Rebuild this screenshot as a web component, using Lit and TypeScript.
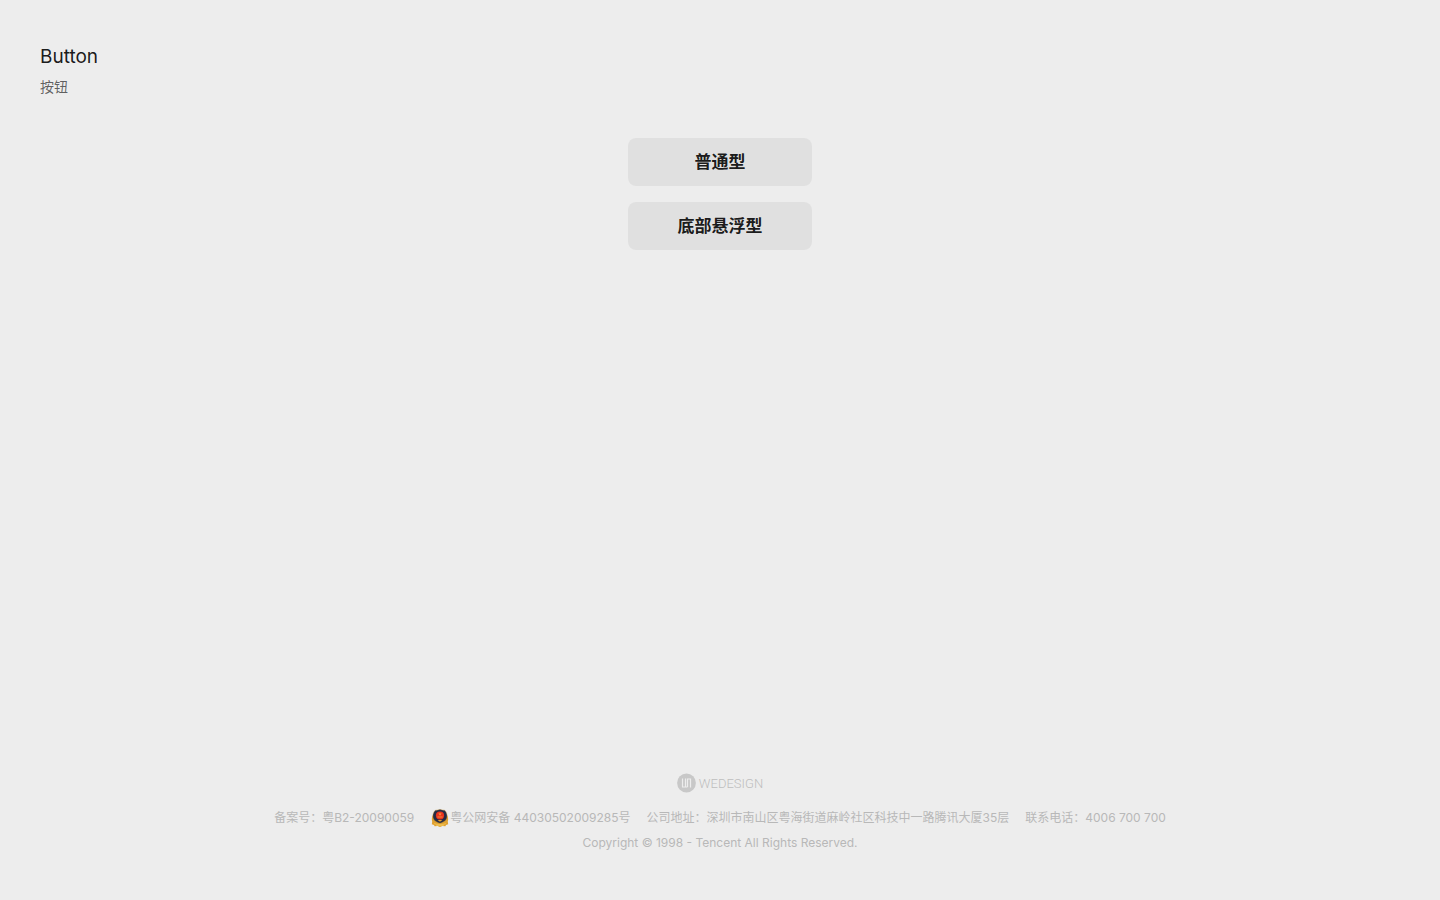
import { LitElement, html, css } from "lit";
import { customElement } from "lit/decorators.js";

@customElement("app-root")
export class AppRoot extends LitElement {
  static styles = css`
    :host {
      display: flex;
      flex-direction: column;
      box-sizing: border-box;
      min-height: 100vh;
      background: #ededed;
      color: rgba(0, 0, 0, 0.9);
      font-family: Inter, "Noto Sans CJK SC", sans-serif;
    }
    .header {
      padding: 40px 40px 0;
    }
    .title {
      margin: 0;
      font-size: 19px;
      font-weight: 400;
      line-height: 34px;
    }
    .desc {
      margin: 2px 0 0;
      font-size: 14px;
      line-height: 22px;
      color: rgba(0, 0, 0, 0.6);
    }
    .actions {
      display: flex;
      flex-direction: column;
      align-items: center;
      gap: 16px;
      padding: 40px 16px;
    }
    .btn {
      width: 184px;
      height: 48px;
      border: 0;
      border-radius: 8px;
      padding: 0 24px;
      background: rgba(0, 0, 0, 0.05);
      color: inherit;
      font: inherit;
      font-size: 17px;
      font-weight: 600;
      line-height: 24px;
      cursor: pointer;
    }
    .footer {
      margin-top: auto;
      padding: 0 40px 45px;
      text-align: center;
      font-size: 12px;
      line-height: 25px;
      color: #b8b8b8;
    }
    .brand {
      display: flex;
      align-items: flex-start;
      justify-content: center;
      gap: 3px;
      margin-bottom: 10px;
      color: #bebebe;
      font: 300 13px/22px Roboto, sans-serif;
    }
    .info {
      display: flex;
      flex-wrap: wrap;
      justify-content: center;
      column-gap: 16px;
    }
    .link {
      display: inline-flex;
      align-items: center;
      color: inherit;
      text-decoration: none;
    }
    .badge {
      margin: 0 1px;
    }
    .copy {
      margin: 0;
    }
  `;

  render() {
    return html`
      <header class="header">
        <h1 class="title">Button</h1>
        <p class="desc">按钮</p>
      </header>
      <main class="actions">
        <button class="btn" type="button">普通型</button>
        <button class="btn" type="button">底部悬浮型</button>
      </main>
      <footer class="footer">
        <div class="brand">
          <svg width="19" height="20" viewBox="0 0 19 20" aria-hidden="true">
            <circle cx="9.5" cy="10" r="9.4" fill="#c8c8c8" />
            <path
              d="M5.500 5.500v8.500H8.500V5.500M10.500 14V6H13.500v8.500M8 14h2.500"
              fill="none"
              stroke="#ededed"
              stroke-width="1.200"
            />
          </svg>
          <span>WEDESIGN</span>
        </div>
        <div class="info">
          <a class="link" href="#">备案号：粤B2-20090059</a>
          <a class="link" href="#">
            <svg class="badge" width="18" height="18" viewBox="0 0 18 18" aria-hidden="true">
              <path d="M2 6C.8 8 .5 10.500 1.200 12.700L.8 15.300l2.200.6.6 1.300 3-.2L9 17.900l2.400-.9 3 .2.6-1.300 2.200-.6-.4-2.600c.7-2.200.4-4.700-.8-6.700z" fill="#dfa02f" />
              <path d="M3.200 14.600c3.400 1.300 8.200 1.300 11.600 0M5 16.200c2.600.7 5.400.7 8 0" fill="none" stroke="#f2c659" stroke-width=".8" />
              <path d="M9 .2c1.500.8 3 1 4.600 1 1.700 1.600 2.500 3.600 2.500 5.800 0 3.500-2.200 5.800-7.100 7.300C4.100 12.800 1.900 10.500 1.900 7c0-2.200.8-4.200 2.500-5.800C6 1.200 7.500 1 9 .2z" fill="#252b45" stroke="#c8973a" stroke-width=".4" />
              <circle cx="9" cy="6.500" r="4.100" fill="#e8341e" />
              <path d="M9 3.200l.5 1.200 1.300.1-1 .9.300 1.200L9 5.900l-1.100.7.3-1.200-1-.9 1.300-.1zM6.400 7.500h5.200v.9H6.400z" fill="#f28a3c" />
              <path d="M6.600 11h4.800L9 12.800z" fill="#e5a02c" />
            </svg>
            <span>粤公网安备 44030502009285号</span>
          </a>
          <span>公司地址：深圳市南山区粤海街道麻岭社区科技中一路腾讯大厦35层</span>
          <span>联系电话：4006 700 700</span>
        </div>
        <p class="copy">Copyright © 1998 - Tencent All Rights Reserved.</p>
      </footer>
    `;
  }
}
